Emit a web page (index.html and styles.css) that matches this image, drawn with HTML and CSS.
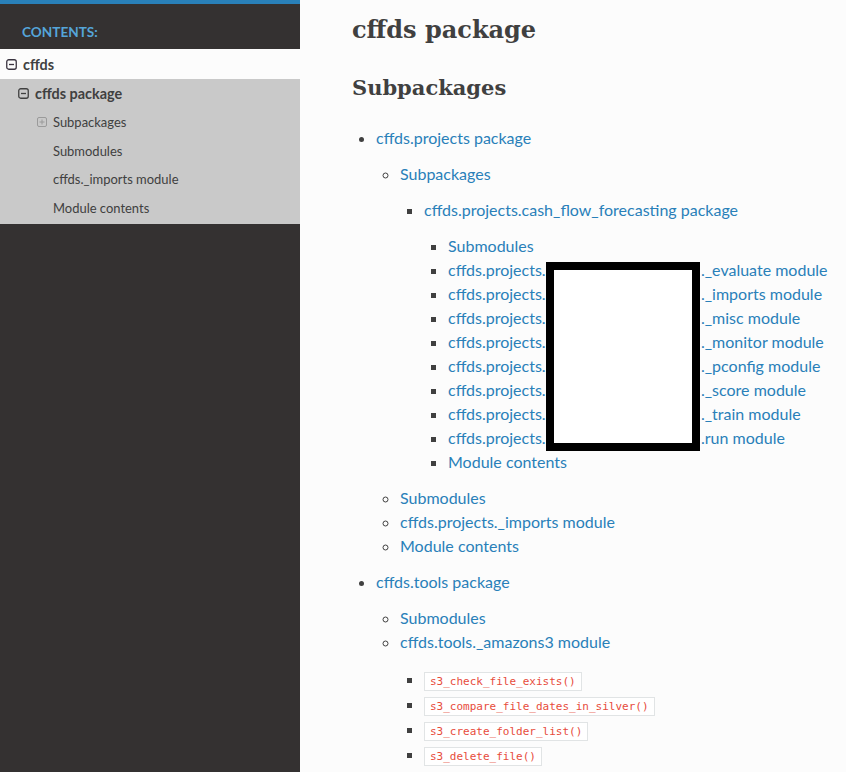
FILE: index.html
```html
<!DOCTYPE html>
<html lang="en">
<head>
<meta charset="utf-8">
<title>cffds package</title>
<link rel="stylesheet" href="styles.css">
</head>
<body>
<div class="page">
  <nav class="sidebar">
    <div class="topbar"></div>
    <p class="caption">Contents:</p>
    <ul class="menu">
      <li class="l1"><a href="#"><svg class="ico" width="11" height="11" viewBox="0 0 11 11"><rect x="0.75" y="0.75" width="9.5" height="9.5" rx="2" fill="none" stroke="currentColor" stroke-width="1.3"/><path d="M3 5.5h5" stroke="currentColor" stroke-width="1.3"/></svg>cffds</a></li>
      <li class="l2"><a href="#"><svg class="ico" width="11" height="11" viewBox="0 0 11 11"><rect x="0.75" y="0.75" width="9.5" height="9.5" rx="2" fill="none" stroke="currentColor" stroke-width="1.3"/><path d="M3 5.5h5" stroke="currentColor" stroke-width="1.3"/></svg>cffds package</a></li>
      <li class="l3 has-ico"><a href="#"><svg class="ico plus" width="10" height="10" viewBox="0 0 10 10"><rect x="0.5" y="0.5" width="9" height="9" rx="1.5" fill="none" stroke="currentColor" stroke-width="1"/><path d="M2.5 5h5M5 2.5v5" stroke="currentColor" stroke-width="1"/></svg>Subpackages</a></li>
      <li class="l3"><a href="#">Submodules</a></li>
      <li class="l3"><a href="#">cffds._imports module</a></li>
      <li class="l3 last"><a href="#">Module contents</a></li>
    </ul>
  </nav>
  <main class="content">
    <h1>cffds package</h1>
    <h2>Subpackages</h2>
    <ul class="toc">
      <li><a href="#">cffds.projects package</a>
        <ul>
          <li><a href="#">Subpackages</a>
            <ul>
              <li><a href="#">cffds.projects.cash_flow_forecasting package</a>
                <ul>
                  <li><a href="#">Submodules</a></li>
                  <li><a href="#"><span class="pre">cffds.projects.</span>._evaluate module</a></li>
                  <li><a href="#"><span class="pre">cffds.projects.</span>._imports module</a></li>
                  <li><a href="#"><span class="pre">cffds.projects.</span>._misc module</a></li>
                  <li><a href="#"><span class="pre">cffds.projects.</span>._monitor module</a></li>
                  <li><a href="#"><span class="pre">cffds.projects.</span>._pconfig module</a></li>
                  <li><a href="#"><span class="pre">cffds.projects.</span>._score module</a></li>
                  <li><a href="#"><span class="pre">cffds.projects.</span>._train module</a></li>
                  <li><a href="#"><span class="pre">cffds.projects.</span>.run module</a></li>
                  <li><a href="#">Module contents</a></li>
                </ul>
              </li>
            </ul>
          </li>
          <li><a href="#">Submodules</a></li>
          <li><a href="#">cffds.projects._imports module</a></li>
          <li><a href="#">Module contents</a></li>
        </ul>
      </li>
      <li><a href="#">cffds.tools package</a>
        <ul>
          <li><a href="#">Submodules</a></li>
          <li><a href="#">cffds.tools._amazons3 module</a>
            <ul class="code-list">
              <li><a href="#"><code>s3_check_file_exists()</code></a></li>
              <li><a href="#"><code>s3_compare_file_dates_in_silver()</code></a></li>
              <li><a href="#"><code>s3_create_folder_list()</code></a></li>
              <li><a href="#"><code>s3_delete_file()</code></a></li>
              <li><a href="#"><code>s3_get_file_from_path()</code></a></li>
            </ul>
          </li>
        </ul>
      </li>
    </ul>
    <div class="redact"></div>
  </main>
</div>
</body>
</html>
```
FILE: styles.css
```css
html, body {
  margin: 0;
  height: 100%;
}
body {
  font-family: Lato, "Noto Sans", sans-serif;
  color: #404040;
  background: #fcfcfc;
  overflow: hidden;
}
a {
  text-decoration: none;
}
.page {
  display: flex;
  height: 772px;
}

/* sidebar */
.sidebar {
  width: 300px;
  flex: none;
  background: #343131;
}
.topbar {
  height: 4px;
  background: #2980b9;
}
.caption {
  margin: 12px 0 0;
  height: 32px;
  line-height: 32px;
  padding: 0 22px;
  color: #55a5d9;
  font-weight: 700;
  font-size: 13.6px;
  text-transform: uppercase;
}
.menu {
  list-style: none;
  margin: 1px 0 0;
  padding: 0;
}
.menu a {
  display: flex;
  align-items: center;
  color: #404040;
  font-size: 14.4px;
  white-space: nowrap;
}
.ico {
  flex: none;
  margin-right: 6px;
}
.l1 a {
  height: 30px;
  padding-left: 6px;
  background: #fcfcfc;
  font-weight: 700;
}
.l1 .ico {
  color: #3a3440;
}
.l2 a {
  height: 29px;
  padding-left: 18px;
  background: #c9c9c9;
  font-weight: 700;
}
.l2 .ico {
  color: #404040;
}
.l3 a {
  height: 28.5px;
  padding-left: 53px;
  background: #c9c9c9;
  font-size: 12.96px;
}
.l3.last a {
  height: 30.5px;
  padding-bottom: 2px;
  box-sizing: border-box;
}
.l3.has-ico a {
  padding-left: 37px;
}
.plus {
  color: #9a9a9a;
}

/* content */
.content {
  flex: 1;
  min-width: 0;
  position: relative;
  padding: 14px 52px 0;
}
h1, h2 {
  font-family: "DejaVu Serif", serif;
  font-weight: 700;
  color: #404040;
  margin: 0;
}
h1 {
  font-size: 24px;
  line-height: 32px;
  margin-bottom: 26px;
}
h2 {
  font-size: 21px;
  line-height: 32px;
  margin-bottom: 22px;
}
.toc, .toc ul {
  margin: 0;
  padding-left: 24px;
}
.toc {
  list-style: disc;
}
.toc li {
  line-height: 24px;
  font-size: 16px;
  white-space: nowrap;
}
.toc ul {
  list-style: circle;
  margin: 12px 0;
}
.toc ul ul {
  list-style: square;
}
.toc a {
  color: #2980b9;
}
.pre {
  display: inline-block;
  width: 253px;
}
.code-list li {
  line-height: 25px;
}
code {
  font-family: "DejaVu Sans Mono", monospace;
  font-size: 11px;
  line-height: 14px;
  color: #e74c3c;
  background: #fff;
  border: 1px solid #e1e4e5;
  padding: 2px 5px;
}
.redact {
  position: absolute;
  left: 246px;
  top: 262px;
  width: 154px;
  height: 189px;
  box-sizing: border-box;
  border: 8px solid #000;
  background: #fff;
}
```
